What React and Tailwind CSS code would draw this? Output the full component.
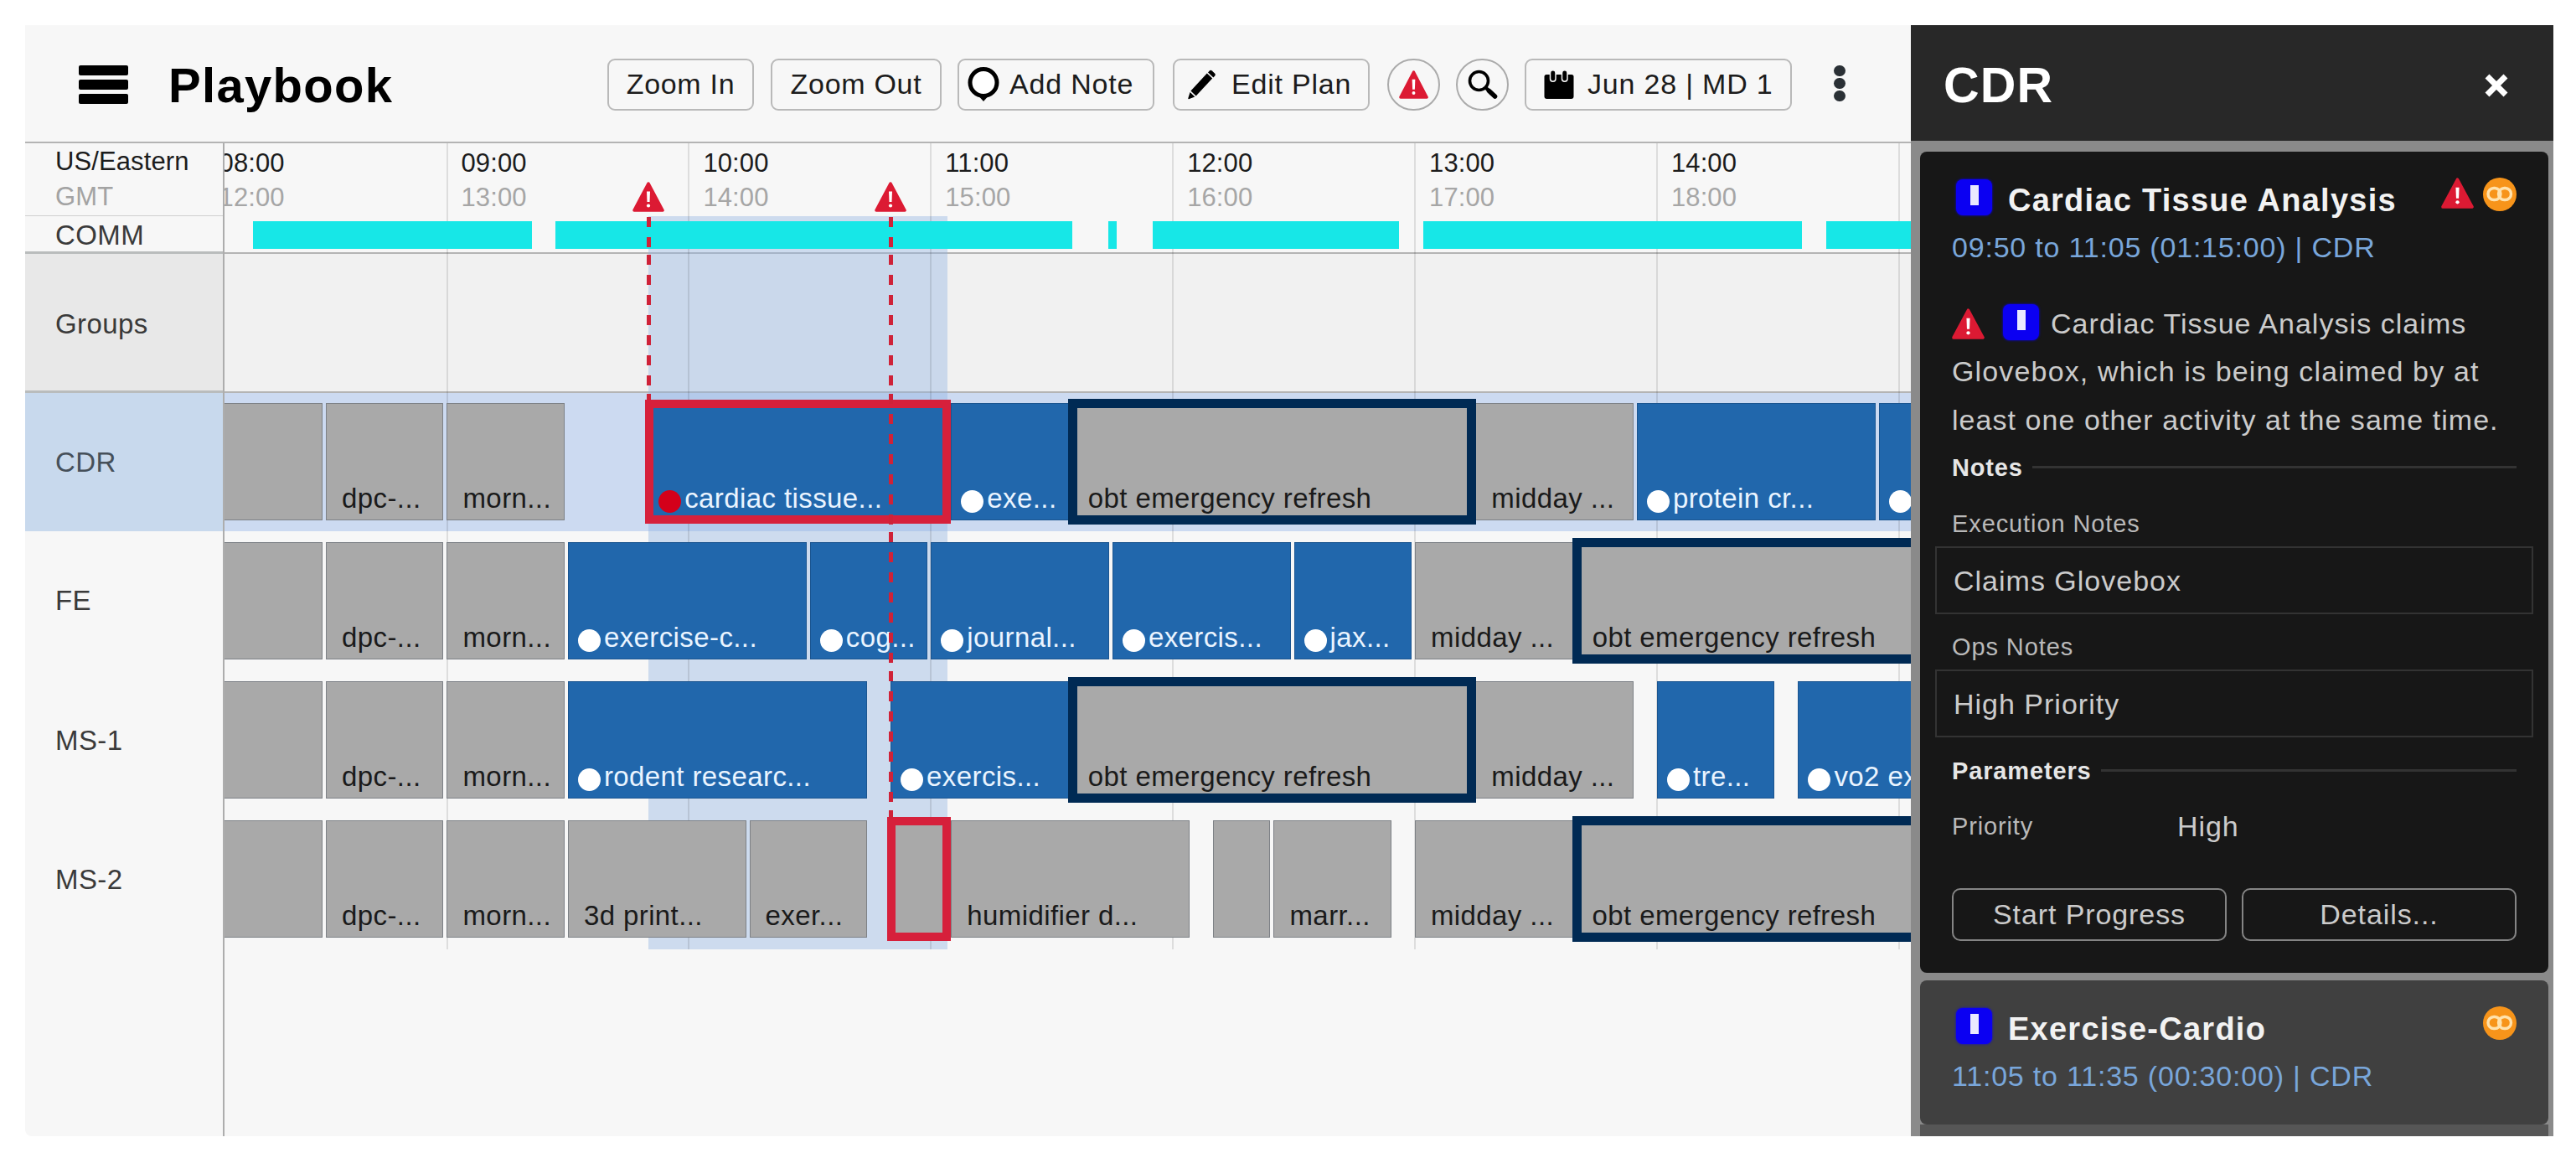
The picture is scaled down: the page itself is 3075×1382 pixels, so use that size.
import { clsx } from 'clsx';

// Horizontal scale of the timeline and the position of 08:00 in it
const PX_PER_MIN = 4.815;
const ORIGIN = -23.4;
const GAP = 4;

// Minutes from 08:00
const comm = [
  [12, 81],
  [87, 215],
  [224, 226],
  [235, 296],
  [302, 396],
  [402, 450],
];

const hours = [
  ['08:00', '12:00'],
  ['09:00', '13:00'],
  ['10:00', '14:00'],
  ['11:00', '15:00'],
  ['12:00', '16:00'],
  ['13:00', '17:00'],
  ['14:00', '18:00'],
];

const crew = [
  {
    name: 'CDR',
    selected: true,
    activities: [
      { start: 0, end: 30 },
      { start: 30, end: 60, label: 'dpc-...' },
      { start: 60, end: 90, label: 'morn...' },
      { start: 110, end: 185, label: 'cardiac tissue...', kind: 'task', outline: 'alert' },
      { start: 185, end: 215, label: 'exe...', kind: 'task' },
      { start: 215, end: 315, label: 'obt emergency refresh', outline: 'pinned' },
      { start: 315, end: 355, label: 'midday ...' },
      { start: 355, end: 415, label: 'protein cr...', kind: 'task' },
      { start: 415, end: 460, label: ' ', kind: 'task' },
    ],
  },
  {
    name: 'FE',
    activities: [
      { start: 0, end: 30 },
      { start: 30, end: 60, label: 'dpc-...' },
      { start: 60, end: 90, label: 'morn...' },
      { start: 90, end: 150, label: 'exercise-c...', kind: 'task' },
      { start: 150, end: 180, label: 'cog...', kind: 'task' },
      { start: 180, end: 225, label: 'journal...', kind: 'task' },
      { start: 225, end: 270, label: 'exercis...', kind: 'task' },
      { start: 270, end: 300, label: 'jax...', kind: 'task' },
      { start: 300, end: 340, label: 'midday ...' },
      { start: 340, end: 440, label: 'obt emergency refresh', outline: 'pinned' },
    ],
  },
  {
    name: 'MS-1',
    activities: [
      { start: 0, end: 30 },
      { start: 30, end: 60, label: 'dpc-...' },
      { start: 60, end: 90, label: 'morn...' },
      { start: 90, end: 165, label: 'rodent researc...', kind: 'task' },
      { start: 170, end: 215, label: 'exercis...', kind: 'task' },
      { start: 215, end: 315, label: 'obt emergency refresh', outline: 'pinned' },
      { start: 315, end: 355, label: 'midday ...' },
      { start: 360, end: 390, label: 'tre...', kind: 'task' },
      { start: 395, end: 460, label: 'vo2 exercise', kind: 'task' },
    ],
  },
  {
    name: 'MS-2',
    activities: [
      { start: 0, end: 30 },
      { start: 30, end: 60, label: 'dpc-...' },
      { start: 60, end: 90, label: 'morn...' },
      { start: 90, end: 135, label: '3d print...' },
      { start: 135, end: 165, label: 'exer...' },
      { start: 170, end: 185, outline: 'alert' },
      { start: 185, end: 245, label: 'humidifier d...' },
      { start: 250, end: 265 },
      { start: 265, end: 295, label: 'marr...' },
      { start: 300, end: 340, label: 'midday ...' },
      { start: 340, end: 440, label: 'obt emergency refresh', outline: 'pinned' },
    ],
  },
];

const WarningIcon = ({ className }) => (
  <svg viewBox="0 0 38 36" preserveAspectRatio="none" className={className}>
    <path d="M19 2.2 36 34H2Z" fill="#dc1a33" stroke="#dc1a33" strokeWidth="3.6" strokeLinejoin="round" />
    <path d="M17 11.5h4l-.5 12.5h-3Z" fill="#fff" />
    <circle cx="19" cy="28.5" r="2.1" fill="#fff" />
  </svg>
);

const LinkBadge = () => (
  <svg viewBox="0 0 40 40" className="h-10 w-10">
    <circle cx="20" cy="20" r="20" fill="#f7941a" />
    <g fill="none" stroke="#ffe2ad" strokeWidth="3.4">
      <rect x="6" y="12.5" width="15" height="14" rx="7" />
      <rect x="18.5" y="12.5" width="15" height="14" rx="7" />
    </g>
  </svg>
);

const ActivityBadge = () => (
  <span className="flex h-[43px] w-[43px] justify-center rounded-lg bg-[#0b00f2] pt-[7px] shadow-[0_0_3px_#0b00f2]">
    <span className="h-6 w-[10px] bg-[#e9e9ff]" />
  </span>
);

const ToolbarButton = ({ className, children }) => (
  <button
    className={clsx(
      'flex h-[62px] items-center rounded-[9px] border-2 border-[#b9b9b9] text-[34px] whitespace-nowrap',
      className
    )}
  >
    {children}
  </button>
);

const Toolbar = () => (
  <header className="flex h-[141px] items-center border-b-2 border-[#b4b4b4] pt-[2px] pl-16">
    <div className="flex w-[59px] flex-col gap-[5px]">
      <span className="h-3 rounded-[2px] bg-black" />
      <span className="h-3 rounded-[2px] bg-black" />
      <span className="h-3 rounded-[2px] bg-black" />
    </div>
    <h1 className="ml-12 w-[524px] pt-[3px] text-[58px] leading-[60px] font-bold tracking-[1.3px] text-black">Playbook</h1>

    <ToolbarButton className="w-[175px] justify-center tracking-[0.7px]">Zoom In</ToolbarButton>
    <ToolbarButton className="ml-5 w-[204px] justify-center tracking-[0.7px]">Zoom Out</ToolbarButton>
    <ToolbarButton className="ml-[19px] w-[235px] pl-[10px] tracking-[0.8px]">
      <svg viewBox="0 0 38 41" className="mr-[12px] h-[41px] w-[38px]">
        <path d="M11 32h16l-8 9Z" />
        <circle cx="19" cy="18.5" r="16" fill="#fff" stroke="#000" strokeWidth="5" />
      </svg>
      Add Note
    </ToolbarButton>
    <ToolbarButton className="ml-[22px] w-[235px] pl-4 tracking-[0.8px]">
      <svg viewBox="0 0 33 36" className="mr-[19px] h-9 w-[33px]">
        <path d="M3.4 25.5 22.8 4.6l6.4 6-19.5 20.8Z" />
        <path d="m24 3.4 1.8-2q1.4-1.2 3 .1l3.2 3q1.4 1.5.2 3l-1.8 1.9Z" />
        <path d="m2.6 27 5.7 5.4-7.2 2.8q-1 .1-.8-1Z" />
      </svg>
      Edit Plan
    </ToolbarButton>
    <button className="ml-[21px] flex h-[62px] w-[63px] items-center justify-center rounded-full border-2 border-[#ababab]">
      <WarningIcon className="h-[34px] w-[35px]" />
    </button>
    <button className="ml-[19px] flex h-[62px] w-[63px] items-center justify-center rounded-full border-2 border-[#ababab]">
      <svg viewBox="0 0 36 36" className="h-9 w-9" fill="none" stroke="#000" strokeLinecap="round">
        <circle cx="13.5" cy="13.5" r="11" strokeWidth="3.6" />
        <path d="m21.5 21.5 3 3" strokeWidth="4" />
        <path d="m25.5 25.5 7 6.5" strokeWidth="5.6" />
      </svg>
    </button>
    <ToolbarButton className="ml-[19px] w-[319px] pl-[21px] tracking-[0.8px]">
      <svg viewBox="0 0 36 36" className="mr-[16px] h-9 w-9">
        <path d="M3 6h30q2.5 0 2.5 2.5V32q0 3-3 3h-29Q.5 35 .5 32V8.5Q.5 6 3 6Z" />
        <g stroke="#f7f7f7" strokeWidth="1.5">
          <rect x="7.5" y=".8" width="6.5" height="13.5" rx="3.2" />
          <rect x="21.5" y=".8" width="6.5" height="13.5" rx="3.2" />
        </g>
      </svg>
      Jun 28 | MD 1
    </ToolbarButton>
    <div className="ml-[50px] flex flex-col gap-[2px] pb-[2px]">
      <span className="h-[13px] w-[14px] rounded-full bg-[#2a3035]" />
      <span className="h-[13px] w-[14px] rounded-full bg-[#2a3035]" />
      <span className="h-[13px] w-[14px] rounded-full bg-[#2a3035]" />
    </div>
  </header>
);

const RowLabels = () => (
  <div className="flex w-[238px] flex-col border-r-2 border-[#adadad] text-[33px] tracking-[0.4px] text-[#3a3a3a]">
    <div className="h-[87px] border-b border-[#cfcfcf] pl-9 text-[31px] tracking-[0.1px]">
      <p className="leading-[43px] text-[#1c1c1c]">US/Eastern</p>
      <p className="leading-[42px] text-[#a3a3a3]">GMT</p>
    </div>
    <div className="h-[45px] border-b-[3px] border-[#b9bcbc] pl-9 leading-[45px]">COMM</div>
    <div className="h-[166px] border-b-[3px] border-[#b9bcbc] bg-[#e8e8e8] pl-9 leading-[168px]">Groups</div>
    {crew.map((member) => (
      <div
        key={member.name}
        className={clsx(
          'flex items-center pl-9',
          member.selected ? 'h-[165px] bg-[#c8d9ed] text-[#46505a]' : 'h-[166.2px]'
        )}
      >
        {member.name}
      </div>
    ))}
  </div>
);

const Activity = ({ activity, previousEnd }) => {
  const isTask = activity.kind === 'task';

  return (
    <div
      className={clsx(
        'flex h-[140px] shrink-0 items-end overflow-hidden border-[1.5px] pb-[7px] text-[33px] leading-9 tracking-[0.4px] whitespace-nowrap',
        isTask ? 'border-[#1b5590] bg-[#2167ac] pl-[11px] text-[#eaf4ff]' : 'border-[#7d8186] bg-[#a9a9a9] pl-[18px] text-[#1a1a1a]',
        activity.outline === 'alert' && 'relative z-10 outline-[10px] -outline-offset-[6px] outline-[#d6203b]',
        activity.outline === 'pinned' && 'relative z-10 outline-[11px] -outline-offset-[6px] outline-[#002a54]'
      )}
      style={{
        width: (activity.end - activity.start) * PX_PER_MIN - GAP,
        marginLeft: (activity.start - previousEnd) * PX_PER_MIN + GAP,
      }}
    >
      {isTask && (
        <span
          className={clsx(
            'mr-1 mb-[1px] h-[27px] w-[27px] shrink-0 rounded-full',
            activity.outline === 'alert' ? 'bg-[#d4001a]' : 'bg-white'
          )}
        />
      )}
      {activity.label}
    </div>
  );
};

const Marker = ({ minute, segments }) => (
  <div
    className="absolute top-[46px] z-20 flex w-[38px] -translate-x-1/2 flex-col items-center"
    style={{ left: ORIGIN + minute * PX_PER_MIN }}
  >
    <WarningIcon className="h-9 w-[38px]" />
    <div className="mt-1 w-[5px]">
      {segments.map((height, i) => (
        <div
          key={i}
          className="bg-[repeating-linear-gradient(to_bottom,transparent_0_2px,#cf2238_2px_14px,transparent_14px_24px)]"
          style={{ height }}
        />
      ))}
    </div>
  </div>
);

const Timeline = () => (
  <div className="relative flex-1 overflow-hidden">
    <div className="flex h-[87px] pt-[3px] text-[31px] leading-[41px] tracking-[0.1px]" style={{ marginLeft: ORIGIN }}>
      {hours.map(([local, gmt]) => (
        <div key={local} className="shrink-0 pl-[17px]" style={{ width: 60 * PX_PER_MIN }}>
          <p className="text-[#1c1c1c]">{local}</p>
          <p className="text-[#a6a6a6]">{gmt}</p>
        </div>
      ))}
    </div>

    {/* Communication coverage */}
    <div className="flex h-[45px] border-b-2 border-[#b4b4b4] pt-[6px]">
      <div className="relative z-[5] flex" style={{ marginLeft: ORIGIN }}>
        {comm.map(([start, end], i) => (
          <span
            key={start}
            className="h-[33px] shrink-0 bg-[#17e7e7]"
            style={{
              width: (end - start) * PX_PER_MIN,
              marginLeft: (start - (i ? comm[i - 1][1] : 0)) * PX_PER_MIN,
            }}
          />
        ))}
      </div>
    </div>

    <div className="h-[166px] border-b-2 border-[#b4b4b4] bg-[#f1f1f1]" />

    {crew.map((member) => (
      <div
        key={member.name}
        className={clsx(member.selected ? 'h-[165px] bg-[#ccdaf1] pt-3' : 'h-[166.2px] pt-[13px]')}
      >
        <div className="relative z-[5] flex" style={{ marginLeft: ORIGIN - GAP }}>
          {member.activities.map((activity, i) => (
            <Activity
              key={activity.start}
              activity={activity}
              previousEnd={i ? member.activities[i - 1].end : 0}
            />
          ))}
        </div>
      </div>
    ))}

    {/* Time span of the selected activity */}
    <div
      className="absolute top-[87px] h-[875px] bg-[#94b6e2]/42"
      style={{ left: ORIGIN + 110 * PX_PER_MIN, width: 75 * PX_PER_MIN - GAP }}
    />

    {/* Hour lines */}
    <div className="absolute top-0 flex h-[962px]" style={{ left: ORIGIN - 1 }}>
      {[...hours, 'end'].map((hour, i) => (
        <span key={i} className="shrink-0 border-l-2 border-black/10" style={{ width: 60 * PX_PER_MIN }} />
      ))}
    </div>

    <Marker minute={110} segments={[45, 166, 9]} />
    <Marker minute={170} segments={[45, 166, 165, 166, 166, 12]} />
  </div>
);

const CardHeading = ({ title, time, warning }) => (
  <>
    <div className="flex items-start pt-[33px]">
      <span className="mr-[19px] ml-[5px]">
        <ActivityBadge />
      </span>
      <h3 className="flex-1 text-[38px] leading-[50px] font-bold tracking-[1.25px] whitespace-nowrap text-[#f2f2f2]">{title}</h3>
      <div className="-mt-[2px] flex gap-[11px]">
        {warning && <WarningIcon className="h-[37px] w-[39px]" />}
        <LinkBadge />
      </div>
    </div>
    <p className="mt-[11px] text-[34px] leading-10 tracking-[0.8px] text-[#79a6da]">{time}</p>
  </>
);

const SectionTitle = ({ children }) => (
  <div className="mt-[23px] flex items-center gap-[11px]">
    <h4 className="text-[29px] leading-[34px] font-bold tracking-[0.85px] text-[#e6e6e6]">{children}</h4>
    <span className="h-[3px] flex-1 bg-[#333]" />
  </div>
);

const Field = ({ label, value }) => (
  <>
    <p className="text-[29px] leading-[34px] tracking-[0.9px] text-[#b9b9b9]">{label}</p>
    <div className="-mx-5 mt-[10px] flex h-[81px] items-center border-2 border-[#333] pt-[2px] pl-5 text-[34px] tracking-[1px]">
      {value}
    </div>
  </>
);

const DetailsPanel = () => (
  <aside className="flex w-[767px] flex-col overflow-hidden bg-[#8a8a8a]">
    <div className="flex h-[138px] shrink-0 items-center justify-between bg-[#282828] pt-[5px] pr-[53px] pl-[39px]">
      <h2 className="text-[59px] leading-[60px] font-bold tracking-[1.2px] text-white">CDR</h2>
      <svg viewBox="0 0 30 30" className="h-[30px] w-[30px]">
        <path d="m4 4 22 22M26 4 4 26" stroke="#fff" strokeWidth="7" />
      </svg>
    </div>

    <div className="min-h-0 flex-1 pt-[13px] pr-[6px] pl-[11px]">
      <section className="h-[980px] rounded-lg bg-[#171717] px-[38px] text-[34px] text-[#cbcbcb]">
        <CardHeading title="Cardiac Tissue Analysis" time="09:50 to 11:05 (01:15:00) | CDR" warning />

        <div className="mt-[43px] leading-[57.3px] tracking-[1.05px] whitespace-nowrap">
          <div className="flex items-center">
            <WarningIcon className="mr-[22px] h-[37px] w-[39px]" />
            <span className="mr-[14px] mb-[5px]">
              <ActivityBadge />
            </span>
            Cardiac Tissue Analysis claims
          </div>
          <p className="tracking-[1.15px]">Glovebox, which is being claimed by at</p>
          <p>least one other activity at the same time.</p>
        </div>

        <div className="-mt-3">
          <SectionTitle>Notes</SectionTitle>
        </div>
        <div className="mt-[33px]">
          <Field label="Execution Notes" value="Claims Glovebox" />
        </div>
        <div className="mt-[22px]">
          <Field label="Ops Notes" value="High Priority" />
        </div>

        <SectionTitle>Parameters</SectionTitle>
        <div className="mt-[29px] flex leading-10">
          <span className="w-[269px] text-[29px] tracking-[0.85px] text-[#b9b9b9]">Priority</span>
          <span className="tracking-[0.9px]">High</span>
        </div>

        <div className="mt-[54px] flex gap-[18px] tracking-[0.9px]">
          <button className="h-[63px] flex-1 rounded-[10px] border-[2.5px] border-[#858585]">Start Progress</button>
          <button className="h-[63px] flex-1 rounded-[10px] border-[2.5px] border-[#858585]">Details...</button>
        </div>
      </section>

      <section className="mt-[9px] h-[172px] rounded-lg bg-[#404040] px-[38px]">
        <CardHeading title="Exercise-Cardio" time="11:05 to 11:35 (00:30:00) | CDR" />
      </section>
      <section className="h-10 bg-[#565656]" />
    </div>
  </aside>
);

const App = () => (
  <div className="h-[1382px] w-[3075px] bg-white pt-[30px] pl-[30px] font-['Liberation_Sans',Arial,sans-serif] text-[#1c1c1c]">
    <div className="flex h-[1326px] w-[3018px] overflow-hidden rounded-bl-[8px] bg-[#f7f7f7]">
      <main className="flex w-[2251px] flex-col">
        <Toolbar />
        <div className="flex flex-1">
          <RowLabels />
          <Timeline />
        </div>
      </main>
      <DetailsPanel />
    </div>
  </div>
);

export default App;
